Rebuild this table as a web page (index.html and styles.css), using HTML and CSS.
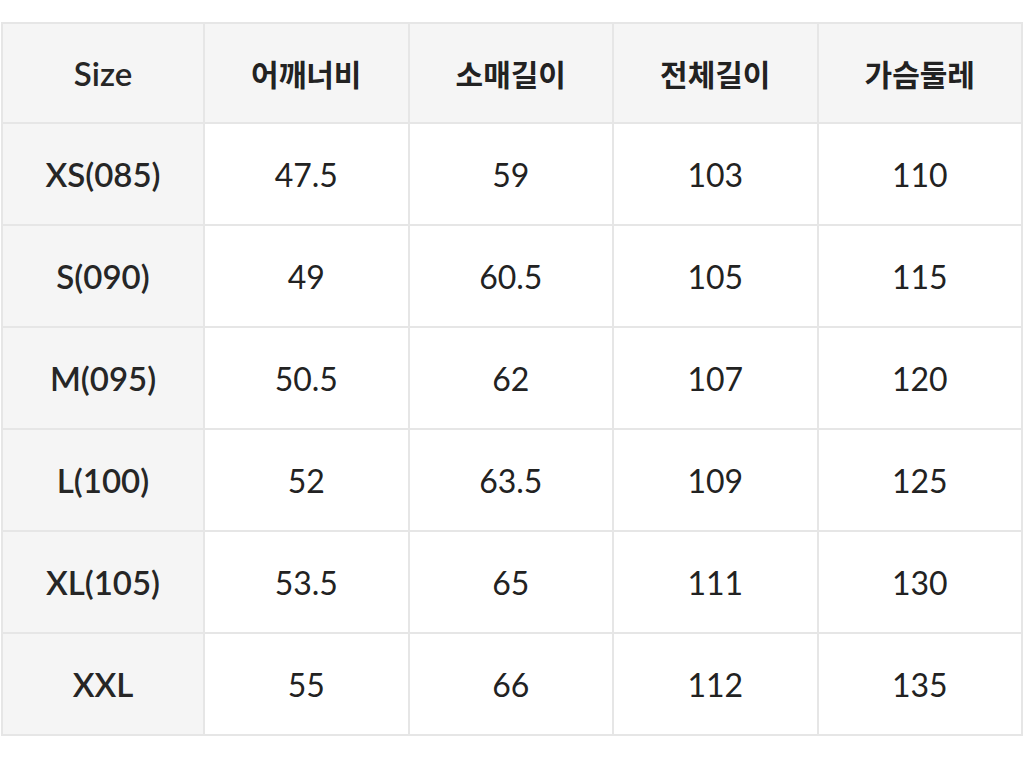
FILE: index.html
```html
<!DOCTYPE html>
<html lang="ko">
<head>
<meta charset="utf-8">
<title>Size chart</title>
<link rel="stylesheet" href="styles.css">
</head>
<body>
<div class="wrap">
<table class="chart">
<colgroup>
<col class="c-first"><col><col><col><col>
</colgroup>
<thead>
<tr><th class="lead">Size</th><th class="ko">어깨너비</th><th class="ko">소매길이</th><th class="ko">전체길이</th><th class="ko">가슴둘레</th></tr>
</thead>
<tbody>
<tr><th class="lead">XS(085)</th><td>47.5</td><td>59</td><td>103</td><td>110</td></tr>
<tr><th class="lead">S(090)</th><td>49</td><td>60.5</td><td>105</td><td>115</td></tr>
<tr><th class="lead">M(095)</th><td>50.5</td><td>62</td><td>107</td><td>120</td></tr>
<tr><th class="lead">L(100)</th><td>52</td><td>63.5</td><td>109</td><td>125</td></tr>
<tr><th class="lead">XL(105)</th><td>53.5</td><td>65</td><td>111</td><td>130</td></tr>
<tr><th class="lead">XXL</th><td>55</td><td>66</td><td>112</td><td>135</td></tr>
</tbody>
</table>
</div>
</body>
</html>
```
FILE: styles.css
```css
html, body {
  margin: 0;
  padding: 0;
  background: #ffffff;
}
.wrap {
  padding: 22px 1px 0 1px;
}
.chart {
  border-collapse: collapse;
  width: 1022px;
  table-layout: fixed;
  font-family: Lato, "Noto Sans CJK KR", sans-serif;
  color: #222222;
}
.c-first {
  width: 202px;
}
.chart th, .chart td {
  border: 2px solid #e6e6e6;
  text-align: center;
  vertical-align: middle;
  padding: 0;
  height: 100px;
  font-size: 32px;
  font-weight: 400;
}
.chart thead th {
  background: #f5f5f5;
  height: 98px;
}
.chart th.lead {
  background: #f5f5f5;
  font-size: 33px;
  font-weight: 600;
  color: #262626;
}
.chart th.ko {
  font-family: "Noto Sans CJK KR", sans-serif;
  font-size: 30px;
  font-weight: 700;
}
```
